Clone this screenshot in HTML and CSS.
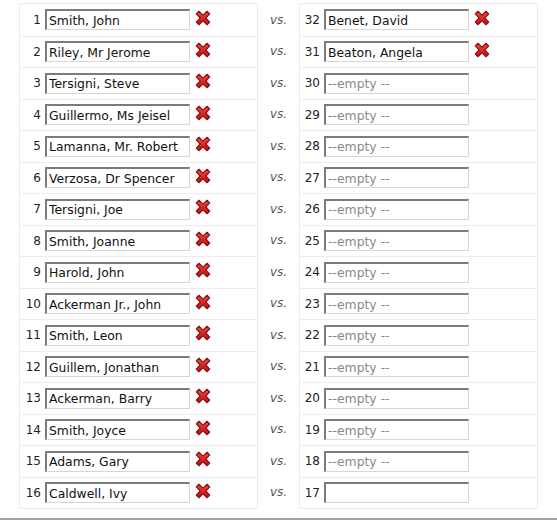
FILE: index.html
```html
<!DOCTYPE html>
<html>
<head>
<meta charset="utf-8">
<link rel="stylesheet" href="styles.css">
</head>
<body>
<div class="page">
  <div class="bracket">
    <div class="box" id="left"></div>
    <div class="vscol" id="vs"></div>
    <div class="box" id="right"></div>
  </div>
</div>
<svg width="0" height="0" class="defs">
  <defs>
    <linearGradient id="xg" x1="0" y1="0" x2="0" y2="1">
      <stop offset="0" stop-color="#f24848"/>
      <stop offset="1" stop-color="#b51010"/>
    </linearGradient>
  </defs>
</svg>
<script>
const left = [
 "Smith, John","Riley, Mr Jerome","Tersigni, Steve","Guillermo, Ms Jeisel",
 "Lamanna, Mr. Robert","Verzosa, Dr Spencer","Tersigni, Joe","Smith, Joanne",
 "Harold, John","Ackerman Jr., John","Smith, Leon","Guillem, Jonathan",
 "Ackerman, Barry","Smith, Joyce","Adams, Gary","Caldwell, Ivy"];
const right = {32:"Benet, David",31:"Beaton, Angela"};
const X = '<svg class="x" viewBox="0 0 16 16" width="18" height="18"><path d="M2 4.4 L4.4 2 L8 5.5 L11.6 2 L14 4.4 L10.5 8 L14 11.6 L11.6 14 L8 10.5 L4.4 14 L2 11.6 L5.5 8 Z" fill="url(#xg)" stroke="#8a1010" stroke-width="1" stroke-linejoin="round"/></svg>';
const L = document.getElementById('left'), R = document.getElementById('right'), V = document.getElementById('vs');
for (let i = 0; i < 16; i++) {
  const n = i + 1, m = 32 - i;
  L.insertAdjacentHTML('beforeend', `<div class="row"><span class="num">${n}</span><input class="name" type="text" value="${left[i]}"><span class="del">${X}</span></div>`);
  V.insertAdjacentHTML('beforeend', `<div class="vsrow">vs.</div>`);
  const v = right[m];
  let inp;
  if (v) inp = `<input class="name" type="text" value="${v}"><span class="del">${X}</span>`;
  else if (m === 17) inp = `<input class="name" type="text" value="">`;
  else inp = `<input class="name" type="text" placeholder="--empty --">`;
  R.insertAdjacentHTML('beforeend', `<div class="row"><span class="num">${m}</span>${inp}</div>`);
}
</script>
</body>
</html>
```

FILE: styles.css
```css
html, body {
  margin: 0;
  padding: 0;
  background: #fff;
}
body {
  font-family: "DejaVu Sans", Verdana, sans-serif;
  font-size: 12px;
  color: #222;
}
.defs {
  position: absolute;
}
.page {
  height: 520px;
  box-sizing: border-box;
  border-bottom: 2px solid #a3a3a3;
  padding: 3px 0 0 19px;
}
.bracket {
  display: flex;
  align-items: flex-start;
}
.box {
  width: 239px;
  box-sizing: border-box;
  border: 1px solid #ececec;
  background: #fff;
}
.row {
  height: 31.5px;
  box-sizing: border-box;
  display: flex;
  align-items: center;
  border-top: 1px solid #ececec;
}
.row:first-child {
  border-top: none;
}
.vscol {
  width: 41px;
  padding-top: 1px;
}
.vsrow {
  height: 31.5px;
  display: flex;
  align-items: center;
  justify-content: center;
  font-style: italic;
  color: #555;
}
.num {
  width: 21px;
  text-align: right;
  flex: none;
}
#right .num {
  width: 20px;
}
.name {
  margin: 0 0 0 4px;
  width: 145px;
  height: 21px;
  box-sizing: border-box;
  padding: 0 0 0 2px;
  font-family: "DejaVu Sans", Verdana, sans-serif;
  font-size: 12.4px;
  color: #111;
  border-top: 2px solid #7b7b7b;
  border-left: 2px solid #7b7b7b;
  border-right: 1px solid #d6d6d6;
  border-bottom: 1px solid #d6d6d6;
  outline: none;
  background: #fff;
}
.name::placeholder {
  color: #8a8a8a;
}
.del {
  margin-left: 4px;
  display: flex;
  margin-top: -4px;
}
```
